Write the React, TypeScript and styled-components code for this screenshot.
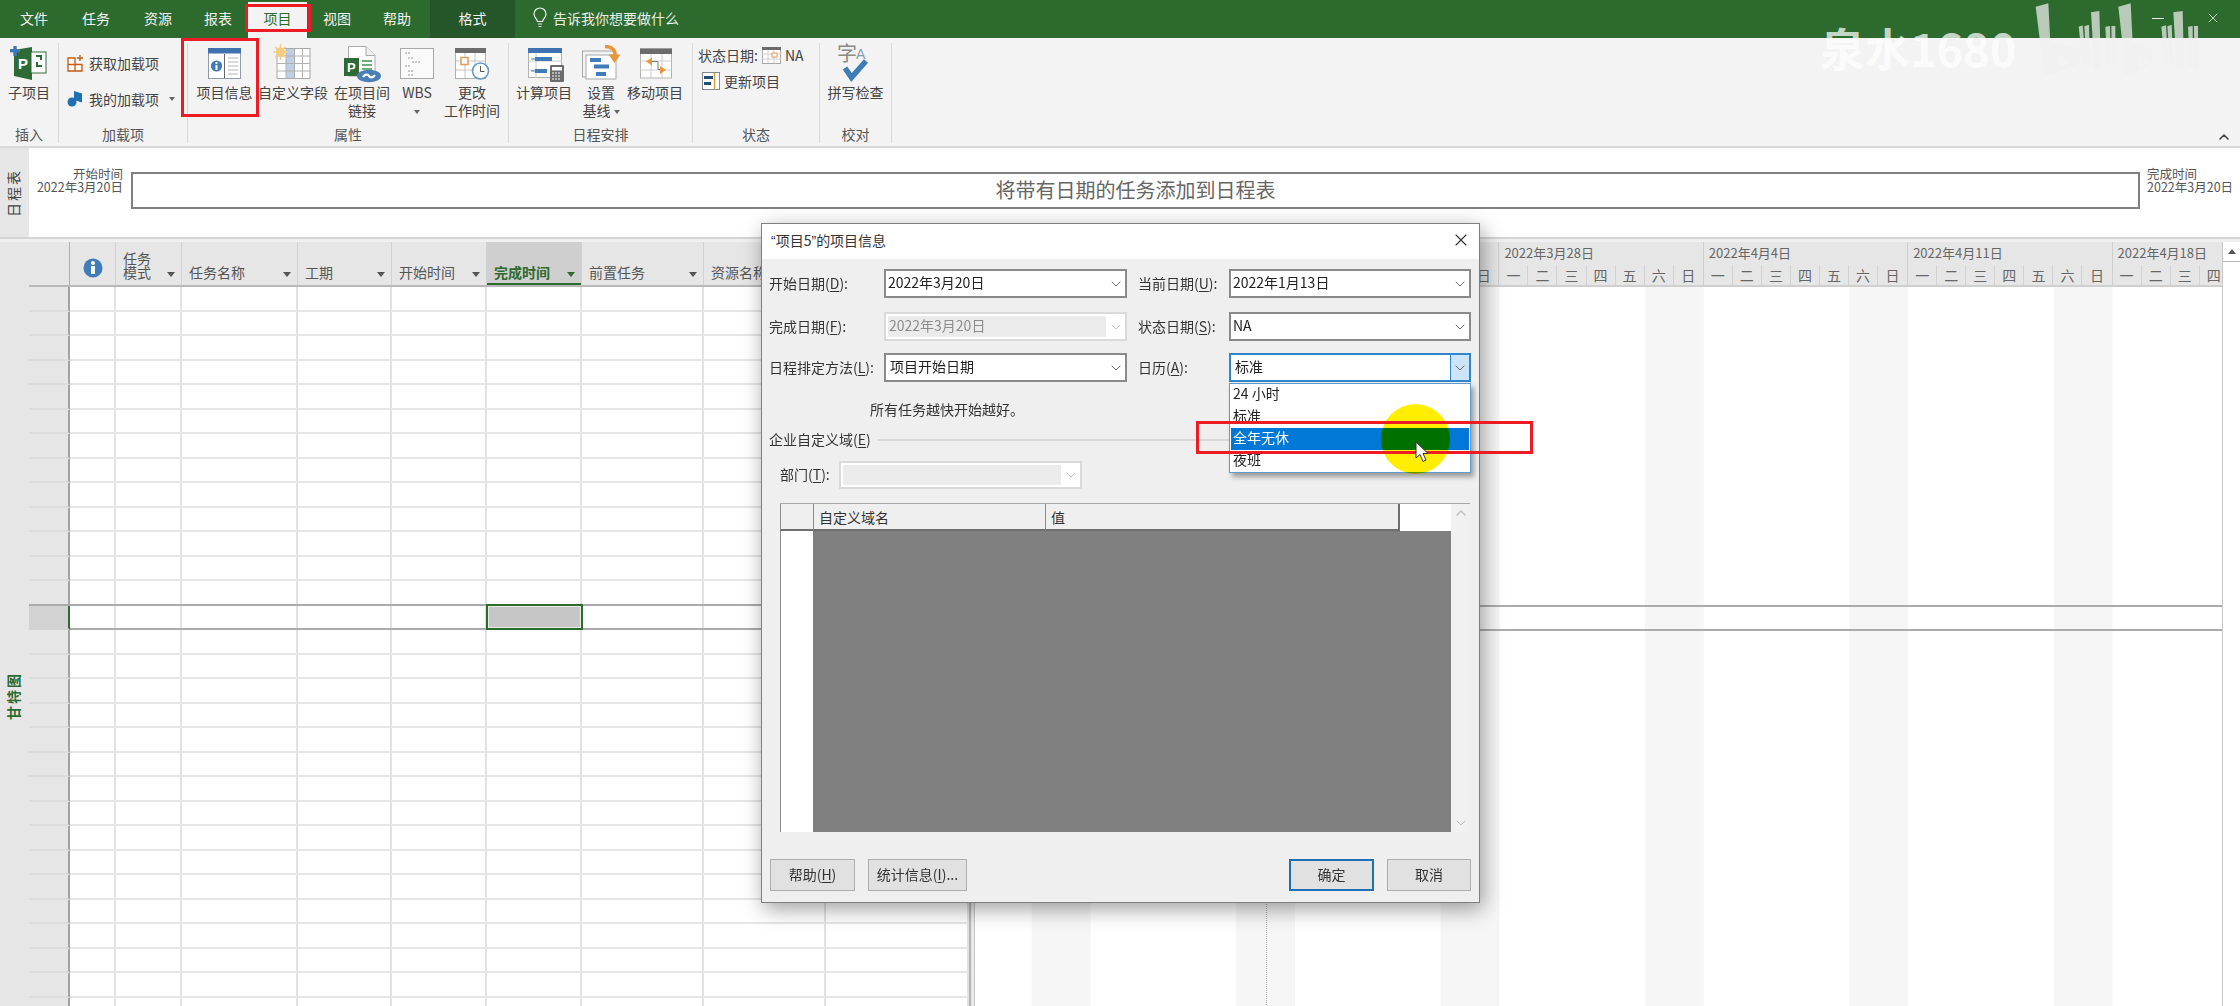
import React from "react";
import styled, { createGlobalStyle } from "styled-components";
import { ChevronDown, ChevronUp, X } from "lucide-react";

const GlobalStyle = createGlobalStyle`
  html, body {
    margin: 0;
    padding: 0;
    background: #fff;
  }
  * {
    box-sizing: border-box;
  }
  body {
    font-family: "Noto Sans CJK SC", "Noto Sans", sans-serif;
    font-size: 14px;
    color: #444;
  }
`;

const Page = styled.div`
  position: relative;
  width: 2240px;
  height: 1006px;
  overflow: hidden;
  display: flex;
  flex-direction: column;
  background: #fff;
  filter: blur(0.35px);
`;

/* ---------- title tabs ---------- */
const TabBar = styled.div`
  height: 38px;
  flex: none;
  display: flex;
  padding-left: 4px;
  background: #2d6a2e;
`;

const Tab = styled.div<{ $w: number; $active?: boolean; $dark?: boolean }>`
  width: ${(p) => p.$w}px;
  margin-top: ${(p) => (p.$active ? 2 : 0)}px;
  margin-left: ${(p) => (p.$dark ? 3 : 0)}px;
  padding-bottom: ${(p) => (p.$active ? 4 : 3)}px;
  display: flex;
  align-items: center;
  justify-content: center;
  color: ${(p) => (p.$active ? "#2d6a2e" : "#f2f2f2")};
  background: ${(p) => (p.$active ? "#f3f3f3" : p.$dark ? "#25562a" : "transparent")};
`;

const TellMe = styled.div`
  display: flex;
  align-items: center;
  gap: 6px;
  margin-left: 18px;
  padding-bottom: 3px;
  color: #e8efe8;
`;

const WindowControls = styled.div`
  margin-left: auto;
  padding-right: 19px;
  padding-bottom: 2px;
  display: flex;
  align-items: center;
  gap: 41px;
  color: #dfe8df;
`;

const MinimizeBar = styled.span`
  width: 12px;
  height: 1px;
  background: #e8efe8;
`;

/* ---------- ribbon ---------- */
const Ribbon = styled.div`
  height: 110px;
  flex: none;
  display: flex;
  position: relative;
  padding-top: 5px;
  background: #f3f3f3;
  border-bottom: 2px solid #d9d9d9;
`;

const Group = styled.div<{ $w: number }>`
  width: ${(p) => p.$w}px;
  height: 100px;
  flex: none;
  display: flex;
  flex-direction: column;
  border-right: 1px solid #d9d9d9;
`;

const GroupBody = styled.div`
  flex: 1;
  display: flex;
  padding-top: 1px;
`;

const GroupLabel = styled.div`
  height: 14px;
  line-height: 11px;
  text-align: center;
  color: #555;
`;

const LargeButton = styled.div<{ $w: number }>`
  width: ${(p) => p.$w}px;
  flex: none;
  display: flex;
  flex-direction: column;
  align-items: center;
  svg {
    flex: none;
    display: block;
    overflow: visible;
  }
`;

const LargeLabel = styled.div`
  margin-top: 1px;
  line-height: 18px;
  text-align: center;
  white-space: nowrap;
`;

const SmallStack = styled.div<{ $left: number; $gap: number; $rowH: number; $top: number }>`
  display: flex;
  flex-direction: column;
  padding: ${(p) => p.$top}px 0 0 ${(p) => p.$left}px;
  gap: ${(p) => p.$gap}px;
  width: 100%;
  > div {
    height: ${(p) => p.$rowH}px;
  }
`;

const SmallRow = styled.div<{ $indent?: number }>`
  display: flex;
  align-items: center;
  gap: 4px;
  white-space: nowrap;
  padding-left: ${(p) => p.$indent || 0}px;
`;

const TinyArrow = styled.span<{ $ml?: number }>`
  display: inline-block;
  width: 0;
  height: 0;
  margin-left: ${(p) => p.$ml ?? 0}px;
  vertical-align: middle;
  border-left: 3px solid transparent;
  border-right: 3px solid transparent;
  border-top: 4px solid #666;
`;

const CollapseButton = styled.div`
  position: absolute;
  right: 8px;
  bottom: 1px;
  color: #444;
  display: flex;
`;

/* ---------- timeline ---------- */
const Timeline = styled.div`
  height: 89px;
  flex: none;
  display: flex;
  align-items: flex-start;
`;

const VerticalTab = styled.div<{ $green?: boolean }>`
  width: 29px;
  flex: none;
  align-self: stretch;
  display: flex;
  align-items: center;
  justify-content: center;
  padding-right: 3px;
  padding-top: ${(p) => (p.$green ? 144 : 0)}px;
  background: #e6e6e6;
  color: ${(p) => (p.$green ? "#2d6a2e" : "#444")};
  font-weight: ${(p) => (p.$green ? 700 : 400)};
  span {
    writing-mode: vertical-rl;
    text-orientation: sideways;
    transform: rotate(180deg);
    white-space: nowrap;
    line-height: 16px;
    letter-spacing: 2px;
  }
`;

const TimelineDates = styled.div<{ $align: string; $w: number; $pl: number }>`
  width: ${(p) => p.$w}px;
  padding: 19px 0 0 ${(p) => p.$pl}px;
  flex: none;
  font-size: 12.5px;
  line-height: 13px;
  color: #555;
  text-align: ${(p) => p.$align};
  white-space: nowrap;
`;

const TimelineBar = styled.div`
  flex: 1;
  height: 37px;
  margin: 24px 0 0 8px;
  display: flex;
  align-items: center;
  justify-content: center;
  padding-bottom: 2px;
  border: 2px solid #808080;
  font-size: 20px;
  color: #666;
`;

const PaneSeparator = styled.div`
  height: 5px;
  flex: none;
  background: #f0f0f0;
  border-top: 2px solid #d4d4d4;
`;

/* ---------- gantt view ---------- */
const Workspace = styled.div`
  flex: 1;
  min-height: 0;
  display: flex;
`;

const COLS = "41px 46px 66px 116px 94px 95px 95px 122px 122px 143px";

const TablePane = styled.div`
  width: 940px;
  flex: none;
  display: flex;
  flex-direction: column;
  overflow: hidden;
`;

const HeaderRow = styled.div`
  height: 45px;
  flex: none;
  display: grid;
  grid-template-columns: ${COLS};
  background: #e6e6e6;
  border-bottom: 2px solid #b9b9b9;
`;

const HeaderCell = styled.div<{ $active?: boolean }>`
  position: relative;
  display: flex;
  align-items: flex-end;
  padding: 0 0 6px 7px;
  line-height: 14px;
  color: ${(p) => (p.$active ? "#2d6a2e" : "#555")};
  font-weight: ${(p) => (p.$active ? 700 : 400)};
  white-space: nowrap;
  background: ${(p) => (p.$active ? "#cfcfcf" : "transparent")};
  border-right: 1px solid #d2d2d2;
  box-shadow: ${(p) => (p.$active ? "inset 0 -2px 0 #2d6a2e" : "none")};
`;

const HeaderArrow = styled.span<{ $green?: boolean }>`
  position: absolute;
  right: 6px;
  bottom: 8px;
  width: 0;
  height: 0;
  border-left: 4px solid transparent;
  border-right: 4px solid transparent;
  border-top: 5px solid ${(p) => (p.$green ? "#2d6a2e" : "#555")};
`;

const InfoCell = styled.div`
  display: flex;
  align-items: center;
  justify-content: center;
  padding-top: 8px;
  border-right: 1px solid #d2d2d2;
`;

const RowHeadBlank = styled.div`
  border-right: 1px solid #b0b0b0;
`;

const TableRow = styled.div<{ $selected?: boolean }>`
  height: 24.5px;
  flex: none;
  display: grid;
  grid-template-columns: ${COLS};
  border-bottom: 2px solid ${(p) => (p.$selected ? "#ababab" : "#e6e6e6")};
  ${(p) => p.$selected && "box-shadow: 0 -2px 0 #ababab; position: relative;"}
`;

const RowHead = styled.div<{ $selected?: boolean }>`
  margin-bottom: -2px;
  background: ${(p) => (p.$selected ? "#d2d2d2" : "#e6e6e6")};
  border-right: 2px solid ${(p) => (p.$selected ? "#2d6a2e" : "#a3a3a3")};
  border-bottom: 2px solid ${(p) => (p.$selected ? "#d2d2d2" : "#dcdcdc")};
`;

const Cell = styled.div<{ $current?: boolean }>`
  border-right: 2px solid #e2e2e2;
  ${(p) =>
    p.$current &&
    `
    margin: -2px -1px -2px -1px;
    background: #c6c6c6;
    border: 2px solid #2d6a2e;
    box-shadow: inset 0 0 0 1px #e4ece4;
    position: relative;
    z-index: 1;
  `}
`;

const Splitter = styled.div`
  width: 6px;
  flex: none;
  background: #e9e9e9;
  border-left: 2px solid #b4b4b4;
  border-right: 1px solid #c8c8c8;
`;

const GanttPane = styled.div`
  flex: 1;
  min-width: 0;
  display: flex;
  flex-direction: column;
  overflow: hidden;
`;

const GanttHeader = styled.div`
  height: 45px;
  flex: none;
  display: flex;
  margin-left: -88.8px;
  background: #e6e6e6;
  border-bottom: 2px solid #cfcfcf;
`;

const Week = styled.div`
  width: 204.4px;
  flex: none;
  display: flex;
  flex-direction: column;
  border-right: 1px solid #cfcfcf;
`;

const WeekDate = styled.div`
  height: 24px;
  padding: 3px 0 0 5px;
  font-size: 13px;
  line-height: 16px;
  color: #666;
  white-space: nowrap;
`;

const WeekDays = styled.div`
  flex: 1;
  display: grid;
  grid-template-columns: repeat(7, 1fr);
`;

const Day = styled.div`
  display: flex;
  align-items: center;
  justify-content: center;
  color: #666;
  border-right: 1px solid #d2d2d2;
  &:last-child {
    border-right: 0;
  }
`;

const GanttBody = styled.div`
  position: relative;
  flex: 1;
  background-image: linear-gradient(90deg, #fff 146px, #f6f6f6 146px);
  background-size: 204.4px 100%;
  background-position: -88.8px 0;
`;

const GanttRow = styled.div<{ $selected?: boolean }>`
  height: 24.5px;
  ${(p) => p.$selected && "border-top: 2px solid #ababab; border-bottom: 2px solid #ababab; margin-top: -1px; height: 26px;"}
`;

const TodayLine = styled.div`
  position: absolute;
  left: 291px;
  top: 0;
  bottom: 0;
  border-left: 1px dotted #aaa;
`;

const ScrollBar = styled.div`
  width: 18px;
  flex: none;
  display: flex;
  flex-direction: column;
  background: #fff;
  border-left: 1px solid #c8c8c8;
`;

const ScrollUp = styled.div`
  height: 20px;
  flex: none;
  display: flex;
  align-items: center;
  justify-content: center;
  border-bottom: 1px solid #b8b8b8;
  &::before {
    content: "";
    border-left: 4px solid transparent;
    border-right: 4px solid transparent;
    border-bottom: 5px solid #555;
  }
`;

/* ---------- project info dialog ---------- */
const Dialog = styled.div`
  position: absolute;
  left: 761px;
  top: 223px;
  width: 719px;
  height: 680px;
  z-index: 5;
  display: flex;
  flex-direction: column;
  background: #efefef;
  border: 1px solid #7f7f7f;
  box-shadow: 3px 6px 20px rgba(0, 0, 0, 0.38);
  color: #333;
`;

const DialogTitle = styled.div`
  height: 35px;
  flex: none;
  display: flex;
  align-items: center;
  justify-content: space-between;
  padding: 0 8px 4px 9px;
  background: #fff;
  color: #333;
`;

const Quote = styled.span`
  font-family: "Liberation Sans", sans-serif;
`;

const FormGrid = styled.div`
  display: grid;
  grid-template-columns: 115px 243px 102px 242px;
  grid-template-rows: 43px 41px 29px;
  padding: 10px 0 0 7px;
`;

const FieldLabel = styled.div<{ $pl?: number }>`
  height: 29px;
  display: flex;
  align-items: center;
  padding-left: ${(p) => p.$pl || 0}px;
  padding-bottom: 2px;
  white-space: nowrap;
  u {
    text-underline-offset: 2px;
  }
`;

const Combo = styled.div<{ $disabled?: boolean; $focused?: boolean }>`
  height: 29px;
  display: flex;
  align-items: stretch;
  background: #fff;
  border: ${(p) =>
    p.$disabled ? "2px solid #dadada" : p.$focused ? "2px solid #2f86cc" : "2px solid #8a8a8a"};
  color: ${(p) => (p.$disabled ? "#8c8c8c" : "#222")};
`;

const ComboText = styled.div<{ $disabled?: boolean; $pl: number }>`
  flex: 1;
  display: flex;
  align-items: center;
  padding: 0 0 3px ${(p) => p.$pl}px;
  white-space: nowrap;
  background: ${(p) => (p.$disabled ? "#ebebeb" : "transparent")};
  margin: ${(p) => (p.$disabled ? "2px 0 2px 2px" : 0)};
`;

const ComboArrow = styled.div<{ $focused?: boolean; $disabled?: boolean }>`
  width: 19px;
  flex: none;
  display: flex;
  align-items: center;
  justify-content: center;
  background: ${(p) => (p.$focused ? "#cce4f7" : "transparent")};
  border-left: ${(p) => (p.$focused ? "1px solid #2f86cc" : "0")};
  color: ${(p) => (p.$disabled ? "#bcbcbc" : "#555")};
`;

const NoteRow = styled.div`
  display: grid;
  grid-template-columns: 460px 1fr;
  height: 26px;
  margin-top: 15px;
  padding: 0 0 2px 7px;
  align-items: center;
`;

const Note = styled.div`
  padding-left: 101px;
`;

const LegendRow = styled.div`
  display: flex;
  align-items: center;
  gap: 6px;
  height: 26px;
  margin-top: 4px;
  padding: 0 8px 3px 7px;
  white-space: nowrap;
  u {
    text-underline-offset: 2px;
  }
`;

const LegendRule = styled.div`
  flex: 1;
  height: 2px;
  margin-top: 3px;
  background: #d9d9d9;
`;

const DeptRow = styled.div`
  display: flex;
  align-items: center;
  margin-top: 8px;
  padding-left: 18px;
  u {
    text-underline-offset: 2px;
  }
`;

const DeptLabel = styled.div`
  width: 59px;
  flex: none;
  padding-bottom: 3px;
`;

const DeptCombo = styled(Combo)`
  width: 243px;
  height: 28px;
`;

const FieldGrid = styled.div`
  display: grid;
  grid-template-columns: 33px 232px 355px 51px 19px;
  grid-template-rows: 27px 1fr;
  height: 329px;
  margin: 14px 9px 0 18px;
  border-top: 1px solid #a8a8a8;
`;

const FieldHead = styled.div<{ $white?: boolean; $last?: boolean }>`
  display: flex;
  align-items: flex-end;
  padding: 0 0 2px 5px;
  background: ${(p) => (p.$white ? "#fff" : "#efefef")};
  border-left: ${(p) => (p.$white ? "0" : "1px solid #8c8c8c")};
  border-right: ${(p) => (p.$last ? "2px solid #6e6e6e" : "0")};
  border-bottom: 2px solid ${(p) => (p.$white ? "#fff" : "#6e6e6e")};
  white-space: nowrap;
`;

const RowNumbers = styled.div`
  background: #fff;
  border-left: 1px solid #8c8c8c;
`;

const FieldValues = styled.div`
  grid-column: 2 / 5;
  background: #808080;
`;

const FieldScroll = styled.div`
  grid-column: 5;
  grid-row: 1 / 3;
  display: flex;
  flex-direction: column;
  align-items: center;
  justify-content: space-between;
  padding: 1px 0;
  background: #f1f1f1;
  color: #bdbdbd;
`;

const ButtonRow = styled.div`
  display: flex;
  gap: 13px;
  margin-top: 27px;
  padding: 0 8px;
`;

const DialogButton = styled.div<{ $w: number; $primary?: boolean; $push?: boolean }>`
  width: ${(p) => p.$w}px;
  height: 32px;
  display: flex;
  align-items: center;
  justify-content: center;
  padding-bottom: 3px;
  margin-left: ${(p) => (p.$push ? "auto" : "0")};
  background: #e1e1e1;
  border: ${(p) => (p.$primary ? "2px solid #1f6fb5" : "1px solid #adadad")};
  u {
    text-underline-offset: 2px;
  }
`;

const DropList = styled.div`
  position: absolute;
  left: 467px;
  top: 159px;
  width: 242px;
  height: 90px;
  padding: 0 1px;
  background: #fff;
  border: 1px solid #5f9ccb;
  box-shadow: 3px 4px 5px rgba(0, 0, 0, 0.35);
`;

const DropItem = styled.div<{ $selected?: boolean }>`
  height: 22px;
  line-height: 19px;
  padding-left: 2px;
  color: ${(p) => (p.$selected ? "#fff" : "#222")};
  background: ${(p) => (p.$selected ? "#0078d7" : "transparent")};
`;

const Spotlight = styled.div`
  position: absolute;
  left: 619px;
  top: 180px;
  width: 69px;
  height: 70px;
  border-radius: 50%;
  background: #ffee00;
  mix-blend-mode: multiply;
`;

const RedFrame = styled.div<{ $l: number; $t: number; $w: number; $h: number }>`
  position: absolute;
  left: ${(p) => p.$l}px;
  top: ${(p) => p.$t}px;
  width: ${(p) => p.$w}px;
  height: ${(p) => p.$h}px;
  border: 3px solid #ed1c24;
  z-index: 6;
`;

const Pointer = styled.svg`
  position: absolute;
  left: 653px;
  top: 217px;
  z-index: 7;
`;

/* ---------- watermark ---------- */
const WatermarkText = styled.div`
  position: absolute;
  left: 1820px;
  top: 19px;
  z-index: 3;
  font-size: 45px;
  line-height: 58px;
  font-weight: 700;
  color: rgba(255, 255, 255, 0.72);
  white-space: nowrap;
`;

const WatermarkLogo = styled.svg`
  position: absolute;
  left: 2000px;
  top: 0;
  z-index: 3;
`;

/* ---------- ribbon drawings ---------- */
const SLOT = { width: 40, height: 38, viewBox: "0 0 40 38" };

function SubProjectIcon() {
  return (
    <svg {...SLOT}>
      <path d="M5 6 L23 3 V36 L5 32 Z" fill="#2d6a35" />
      <rect x="22" y="8" width="15" height="21" fill="#fff" stroke="#2d6a35" />
      <path d="M27 12h5v4M33 22h-5v-4" fill="none" stroke="#2d6a35" strokeWidth="2" />
      <rect x="1" y="5" width="10" height="3.4" fill="#4178b4" />
      <rect x="4.3" y="2" width="3.4" height="10" fill="#4178b4" />
      <text x="9" y="25" fontSize="15" fontWeight="700" fill="#fff" fontFamily="Liberation Sans">P</text>
    </svg>
  );
}

function ProjectInfoIcon() {
  return (
    <svg {...SLOT}>
      <rect x="3.5" y="4.5" width="32" height="30" fill="#fff" stroke="#8f9cab" />
      <rect x="3" y="4" width="33" height="5.5" fill="#3f72ae" />
      <circle cx="11.5" cy="22" r="5.6" fill="#3f7cb8" />
      <rect x="10.5" y="21" width="2" height="5" fill="#fff" />
      <rect x="10.5" y="18" width="2" height="2" fill="#fff" />
      <path d="M19.5 10v24" stroke="#666" />
      <path d="M23 14h10M23 18h10M23 22h10M23 26h10M23 30h10" stroke="#b5b5b5" />
    </svg>
  );
}

function CustomFieldIcon() {
  return (
    <svg {...SLOT}>
      <rect x="4" y="4.5" width="33" height="30" fill="#fff" stroke="#a8a8a8" />
      <rect x="13" y="5" width="8.5" height="29" fill="#bccfe4" />
      <path d="M13 5v29M21.5 5v29M29.5 5v29M4 12h33M4 19.5h33M4 27h33" stroke="#b0b0b0" fill="none" />
      <circle cx="7.5" cy="8" r="4.5" fill="#f6cd80" />
      <path d="M7.5 0v16M0 8h15M2.2 2.7l10.6 10.6M12.8 2.7L2.2 13.3" stroke="#f6cd80" strokeWidth="1.5" />
    </svg>
  );
}

function LinkIcon() {
  return (
    <svg {...SLOT}>
      <path d="M6.5 2.5H24l9 9V32H6.5Z" fill="#fff" stroke="#aaa" />
      <path d="M24 2.5v9h9" fill="#eee" stroke="#aaa" />
      <path d="M20 17h10M20 21h10M20 25h10" stroke="#6fae7c" strokeWidth="2" />
      <rect x="2" y="14" width="15" height="18" fill="#2d6a35" />
      <text x="5" y="28" fontSize="13" fontWeight="700" fill="#fff" fontFamily="Liberation Sans">P</text>
      <ellipse cx="27" cy="32" rx="12" ry="6.2" fill="#4a7fb5" />
      <path d="M21 33c2-3 5-3 6-1s4 2 6-1" fill="none" stroke="#fff" strokeWidth="2.2" />
    </svg>
  );
}

function WbsIcon() {
  return (
    <svg {...SLOT}>
      <rect x="3.5" y="4.5" width="33" height="30" fill="#fafafa" stroke="#a8a8a8" />
      <path d="M8 9h5M11 14h6M15 18h8M8 22h5M11 27h6M11 31h5" stroke="#9a9a9a" strokeDasharray="2 1" />
    </svg>
  );
}

function WorkTimeIcon() {
  return (
    <svg {...SLOT}>
      <rect x="3.5" y="4.5" width="30" height="30" fill="#fff" stroke="#b0b0b0" />
      <rect x="3" y="4" width="31" height="5" fill="#6b6b6b" />
      <path d="M13 9v25M23 9v25M3.5 17h30M3.5 26h30" stroke="#c4c4c4" />
      <rect x="9" y="13.5" width="7" height="7" fill="#fff" stroke="#dd9a5c" strokeWidth="1.5" />
      <circle cx="28.5" cy="27" r="8" fill="#fff" stroke="#6a9bc8" strokeWidth="1.6" />
      <path d="M28.5 22v5.500h4" fill="none" stroke="#555" />
    </svg>
  );
}

function CalcProjectIcon() {
  return (
    <svg {...SLOT}>
      <rect x="4.5" y="4.5" width="33" height="29" fill="#fff" stroke="#b0b0b0" />
      <rect x="4" y="4" width="34" height="5" fill="#3f72ae" />
      <path d="M12 9v25M4.500 17h33M4.500 26h20" stroke="#c8c8c8" />
      <rect x="11" y="13" width="17" height="4" fill="#3f7cb8" />
      <rect x="11" y="25" width="12" height="4" fill="#3f7cb8" />
      <path d="M7 15h4M7 27h4" stroke="#3f7cb8" />
      <rect x="26" y="21" width="14" height="17" rx="1" fill="#6b6b6b" />
      <rect x="28" y="23" width="10" height="3.5" fill="#fff" />
      <path d="M28 29h2m1 0h2m1 0h2M28 32h2m1 0h2m1 0h2M28 35h2m1 0h2m1 0h2" stroke="#fff" />
    </svg>
  );
}

function BaselineIcon() {
  return (
    <svg {...SLOT}>
      <rect x="1.5" y="7" width="31" height="26" fill="#f3f3f3" stroke="#a8a8a8" />
      <rect x="5" y="11" width="30" height="24" fill="#fff" stroke="#a8a8a8" />
      <rect x="9" y="14" width="11" height="4" fill="#3f7cb8" />
      <rect x="13" y="20.5" width="15" height="4" fill="#3f7cb8" />
      <rect x="15" y="28" width="10" height="4" fill="#3f7cb8" />
      <path d="M24 2.500c7 0 11 4 10 10" fill="none" stroke="#e8963c" strokeWidth="3.5" />
      <path d="M27.500 10.500h12L33.500 19Z" fill="#e8963c" />
    </svg>
  );
}

function MoveProjectIcon() {
  return (
    <svg {...SLOT}>
      <rect x="5.5" y="5" width="31" height="29" fill="#fff" stroke="#b4b4b4" />
      <rect x="5" y="4.5" width="32" height="5.5" fill="#6b6b6b" />
      <path d="M5.500 17h31M5.500 26h31M16 10v24M27 10v24" stroke="#cdcdcd" />
      <path d="M11 17.500l6-4v8Z" fill="#e8963c" />
      <path d="M31 26l-6-4v8Z" fill="#e8963c" />
      <path d="M17 17.500h6v8h2" fill="none" stroke="#777" />
    </svg>
  );
}

function SpellIcon() {
  return (
    <svg {...SLOT}>
      <text x="1" y="17" fontSize="20" fill="#8a8a8a">字</text>
      <text x="20" y="15" fontSize="14" fill="#8a9bb0" fontFamily="Liberation Sans">A</text>
      <path d="M9 24l6.500 9.500L30 17" fill="none" stroke="#3f7cb8" strokeWidth="5.5" />
    </svg>
  );
}

function AddinStoreIcon() {
  return (
    <svg width="18" height="18" viewBox="0 0 18 18">
      <path d="M1 4h7v6.500H1ZM8 10.500h7V17H8ZM1 10.500h7V17H1Z" fill="#fff" stroke="#c55a11" strokeWidth="1.3" />
      <path d="M13 1v6M10 4h6" stroke="#c55a11" strokeWidth="1.3" />
    </svg>
  );
}

function MyAddinIcon() {
  return (
    <svg width="18" height="18" viewBox="0 0 18 18">
      <path d="M7 1l8 2.500v9L7 10Z" fill="#1f6fb5" />
      <circle cx="5" cy="12" r="4.5" fill="#1f6fb5" />
    </svg>
  );
}

function StatusDateIcon() {
  return (
    <svg width="19" height="17" viewBox="0 0 19 17">
      <rect x="0.5" y="0.5" width="18" height="16" fill="#fff" stroke="#a8a8a8" />
      <rect x="0" y="0" width="19" height="3" fill="#6b6b6b" />
      <path d="M6 3v13M12 3v13M0 7h19M0 12h19" stroke="#cfcfcf" />
      <rect x="10" y="6" width="5" height="4" fill="#fff" stroke="#dd9a5c" />
    </svg>
  );
}

function UpdateProjectIcon() {
  return (
    <svg width="18" height="18" viewBox="0 0 18 18">
      <rect x="0.5" y="0.5" width="17" height="17" fill="#fff" stroke="#8a8a8a" />
      <rect x="2" y="4" width="9" height="3" fill="#1f4e79" />
      <rect x="2" y="10" width="7" height="3" fill="#1f4e79" />
      <path d="M12.500 1v16" stroke="#e8963c" strokeWidth="1.4" />
    </svg>
  );
}

function BulbIcon() {
  return (
    <svg width="14" height="22" viewBox="0 0 14 22">
      <path d="M4.500 14.500C3.800 11.500 1 10.500 1 7a6 6 0 0 1 12 0c0 3.500-2.800 4.500-3.500 7.500Z" fill="none" stroke="#eef3ee" strokeWidth="1.2" />
      <path d="M5 17h4M5.500 19.500h3" stroke="#eef3ee" strokeWidth="1.2" />
    </svg>
  );
}

function InfoBadge() {
  return (
    <svg width="20" height="20" viewBox="0 0 20 20">
      <circle cx="10" cy="10" r="9.500" fill="#3f7cb8" />
      <rect x="8" y="8" width="4" height="8" fill="#fff" />
      <circle cx="10" cy="5" r="2" fill="#fff" />
    </svg>
  );
}

const columns = [
  { title: "任务名称" },
  { title: "工期" },
  { title: "开始时间" },
  { title: "完成时间", active: true },
  { title: "前置任务" },
  { title: "资源名称" },
  { title: "" },
];

const weeks = ["2022年3月7日", "2022年3月14日", "2022年3月21日", "2022年3月28日", "2022年4月4日", "2022年4月11日", "2022年4月18日"];
const dayNames = ["一", "二", "三", "四", "五", "六", "日"];
const rowIndexes = Array.from({ length: 30 }, (_, i) => i);
const SELECTED_ROW = 13;
const CURRENT_COLUMN = 5;

function ComboField(props: { text?: string; disabled?: boolean; focused?: boolean; pl?: number }) {
  return (
    <Combo $disabled={props.disabled} $focused={props.focused}>
      <ComboText $disabled={props.disabled} $pl={props.disabled ? 1 : props.pl ?? 2}>
        {props.text}
      </ComboText>
      <ComboArrow $focused={props.focused} $disabled={props.disabled}>
        <ChevronDown size={16} strokeWidth={1.3} />
      </ComboArrow>
    </Combo>
  );
}

export default function App() {
  return (
    <Page>
      <GlobalStyle />

      <TabBar>
        <Tab $w={60}>文件</Tab>
        <Tab $w={64}>任务</Tab>
        <Tab $w={60}>资源</Tab>
        <Tab $w={60}>报表</Tab>
        <Tab $w={59} $active>项目</Tab>
        <Tab $w={60}>视图</Tab>
        <Tab $w={60}>帮助</Tab>
        <Tab $w={85} $dark>格式</Tab>
        <TellMe>
          <BulbIcon />
          告诉我你想要做什么
        </TellMe>
        <WindowControls>
          <MinimizeBar />
          <X size={16} strokeWidth={1.2} />
        </WindowControls>
      </TabBar>

      <Ribbon>
        <Group $w={59}>
          <GroupBody>
            <LargeButton $w={58}>
              <SubProjectIcon />
              <LargeLabel>子项目</LargeLabel>
            </LargeButton>
          </GroupBody>
          <GroupLabel>插入</GroupLabel>
        </Group>
        <Group $w={129}>
          <GroupBody>
            <SmallStack $left={8} $gap={0} $rowH={36} $top={1}>
              <SmallRow>
                <AddinStoreIcon />
                获取加载项
              </SmallRow>
              <SmallRow>
                <MyAddinIcon />
                我的加载项
                <TinyArrow $ml={6} />
              </SmallRow>
            </SmallStack>
          </GroupBody>
          <GroupLabel>加载项</GroupLabel>
        </Group>
        <Group $w={321}>
          <GroupBody>
            <LargeButton $w={73}>
              <ProjectInfoIcon />
              <LargeLabel>项目信息</LargeLabel>
            </LargeButton>
            <LargeButton $w={64}>
              <CustomFieldIcon />
              <LargeLabel>自定义字段</LargeLabel>
            </LargeButton>
            <LargeButton $w={74}>
              <LinkIcon />
              <LargeLabel>
                在项目间
                <br />
                链接
              </LargeLabel>
            </LargeButton>
            <LargeButton $w={36}>
              <WbsIcon />
              <LargeLabel>
                WBS
                <br />
                <TinyArrow />
              </LargeLabel>
            </LargeButton>
            <LargeButton $w={74}>
              <WorkTimeIcon />
              <LargeLabel>
                更改
                <br />
                工作时间
              </LargeLabel>
            </LargeButton>
          </GroupBody>
          <GroupLabel>属性</GroupLabel>
        </Group>
        <Group $w={184}>
          <GroupBody>
            <LargeButton $w={70}>
              <CalcProjectIcon />
              <LargeLabel>计算项目</LargeLabel>
            </LargeButton>
            <LargeButton $w={44}>
              <BaselineIcon />
              <LargeLabel>
                设置
                <br />
                基线
                <TinyArrow $ml={3} />
              </LargeLabel>
            </LargeButton>
            <LargeButton $w={64}>
              <MoveProjectIcon />
              <LargeLabel>移动项目</LargeLabel>
            </LargeButton>
          </GroupBody>
          <GroupLabel>日程安排</GroupLabel>
        </Group>
        <Group $w={127}>
          <GroupBody>
            <SmallStack $left={5} $gap={4} $rowH={22} $top={0}>
              <SmallRow>
                状态日期:
                <StatusDateIcon />
                NA
              </SmallRow>
              <SmallRow $indent={4}>
                <UpdateProjectIcon />
                更新项目
              </SmallRow>
            </SmallStack>
          </GroupBody>
          <GroupLabel>状态</GroupLabel>
        </Group>
        <Group $w={72}>
          <GroupBody>
            <LargeButton $w={71}>
              <SpellIcon />
              <LargeLabel>拼写检查</LargeLabel>
            </LargeButton>
          </GroupBody>
          <GroupLabel>校对</GroupLabel>
        </Group>
        <CollapseButton>
          <ChevronUp size={16} strokeWidth={2.4} />
        </CollapseButton>
      </Ribbon>

      <Timeline>
        <VerticalTab>
          <span>日程表</span>
        </VerticalTab>
        <TimelineDates $align="right" $w={94} $pl={0}>
          开始时间
          <br />
          2022年3月20日
        </TimelineDates>
        <TimelineBar>将带有日期的任务添加到日程表</TimelineBar>
        <TimelineDates $align="left" $w={100} $pl={7}>
          完成时间
          <br />
          2022年3月20日
        </TimelineDates>
      </Timeline>
      <PaneSeparator />

      <Workspace>
        <VerticalTab $green>
          <span>甘特图</span>
        </VerticalTab>
        <TablePane>
          <HeaderRow>
            <RowHeadBlank />
            <InfoCell>
              <InfoBadge />
            </InfoCell>
            <HeaderCell>
              任务
              <br />
              模式
              <HeaderArrow />
            </HeaderCell>
            {columns.map((c, i) => (
              <HeaderCell key={i} $active={c.active}>
                {c.title}
                {c.title && <HeaderArrow $green={c.active} />}
              </HeaderCell>
            ))}
          </HeaderRow>
          {rowIndexes.map((r) => (
            <TableRow key={r} $selected={r === SELECTED_ROW}>
              <RowHead $selected={r === SELECTED_ROW} />
              {Array.from({ length: 9 }, (_, c) => (
                <Cell key={c} $current={r === SELECTED_ROW && c === CURRENT_COLUMN} />
              ))}
            </TableRow>
          ))}
        </TablePane>
        <Splitter />
        <GanttPane>
          <GanttHeader>
            {weeks.map((w) => (
              <Week key={w}>
                <WeekDate>{w}</WeekDate>
                <WeekDays>
                  {dayNames.map((d) => (
                    <Day key={d}>{d}</Day>
                  ))}
                </WeekDays>
              </Week>
            ))}
          </GanttHeader>
          <GanttBody>
            <TodayLine />
            {rowIndexes.map((r) => (
              <GanttRow key={r} $selected={r === SELECTED_ROW} />
            ))}
          </GanttBody>
        </GanttPane>
        <ScrollBar>
          <ScrollUp />
        </ScrollBar>
      </Workspace>

      <RedFrame $l={245} $t={4} $w={66} $h={28} />
      <RedFrame $l={181} $t={38} $w={78} $h={79} />

      <WatermarkText>泉水1680</WatermarkText>
      <WatermarkLogo width="240" height="90" viewBox="0 0 720 270">
        <g fill="#f0f0f0" fillOpacity="0.72" fillRule="evenodd">
          <path d="M107 20L145 10L151 128C190 135 225 142 245 152L238 190C205 205 170 218 133 226ZM174 165L172 205L215 185Z" />
          <path d="M355 20L392 10L398 128C425 135 445 142 460 150L455 190C430 205 405 218 378 226ZM416 165L414 205L450 185Z" />
          <path d="M273 37L298 33L303 205L283 205Z" />
          <path d="M236 80L248 76L258 190L248 190ZM253 78L267 75L270 195L260 195Z" />
          <path d="M316 80L330 78L332 190L322 190ZM334 78L346 78L346 190L336 190Z" />
          <path d="M520 37L548 33L552 205L530 205Z" />
          <path d="M484 80L498 76L505 190L495 190ZM502 78L515 75L520 195L510 195Z" />
          <path d="M564 80L578 78L578 205L570 205ZM582 78L594 78L594 212L584 212Z" />
        </g>
      </WatermarkLogo>

      <Dialog>
        <DialogTitle>
          <span>
            <Quote>“</Quote>项目5<Quote>”</Quote>的项目信息
          </span>
          <X size={20} strokeWidth={1.3} color="#333" />
        </DialogTitle>
        <FormGrid>
          <FieldLabel>开始日期(<u>D</u>):</FieldLabel>
          <ComboField text="2022年3月20日" />
          <FieldLabel $pl={11}>当前日期(<u>U</u>):</FieldLabel>
          <ComboField text="2022年1月13日" />
          <FieldLabel>完成日期(<u>F</u>):</FieldLabel>
          <ComboField text="2022年3月20日" disabled />
          <FieldLabel $pl={11}>状态日期(<u>S</u>):</FieldLabel>
          <ComboField text="NA" />
          <FieldLabel>日程排定方法(<u>L</u>):</FieldLabel>
          <ComboField text="项目开始日期" pl={4} />
          <FieldLabel $pl={11}>日历(<u>A</u>):</FieldLabel>
          <ComboField text="标准" focused pl={4} />
        </FormGrid>
        <NoteRow>
          <Note>所有任务越快开始越好。</Note>
          <span>优先级(<u>P</u>):</span>
        </NoteRow>
        <LegendRow>
          <span>企业自定义域(<u>E</u>)</span>
          <LegendRule />
        </LegendRow>
        <DeptRow>
          <DeptLabel>部门(<u>T</u>):</DeptLabel>
          <DeptCombo $disabled>
            <ComboText $disabled $pl={2} />
            <ComboArrow $disabled>
              <ChevronDown size={16} strokeWidth={1.3} />
            </ComboArrow>
          </DeptCombo>
        </DeptRow>
        <FieldGrid>
          <FieldHead />
          <FieldHead>自定义域名</FieldHead>
          <FieldHead $last>值</FieldHead>
          <FieldHead $white />
          <FieldScroll>
            <ChevronUp size={16} strokeWidth={2} />
            <ChevronDown size={16} strokeWidth={1.5} />
          </FieldScroll>
          <RowNumbers />
          <FieldValues />
        </FieldGrid>
        <ButtonRow>
          <DialogButton $w={85}>帮助(<u>H</u>)</DialogButton>
          <DialogButton $w={99}>统计信息(<u>I</u>)...</DialogButton>
          <DialogButton $w={85} $primary $push>确定</DialogButton>
          <DialogButton $w={84}>取消</DialogButton>
        </ButtonRow>

        <DropList>
          <DropItem>24 小时</DropItem>
          <DropItem>标准</DropItem>
          <DropItem $selected>全年无休</DropItem>
          <DropItem>夜班</DropItem>
        </DropList>
        <Spotlight />
        <RedFrame $l={434} $t={197} $w={337} $h={33} />
        <Pointer width="14" height="22" viewBox="0 0 14 22">
          <path d="M1 1V17L5 13.500L8 20.500L11 19L8 12.500H13Z" fill="#fff" stroke="#333" strokeWidth="1" />
        </Pointer>
      </Dialog>
    </Page>
  );
}
